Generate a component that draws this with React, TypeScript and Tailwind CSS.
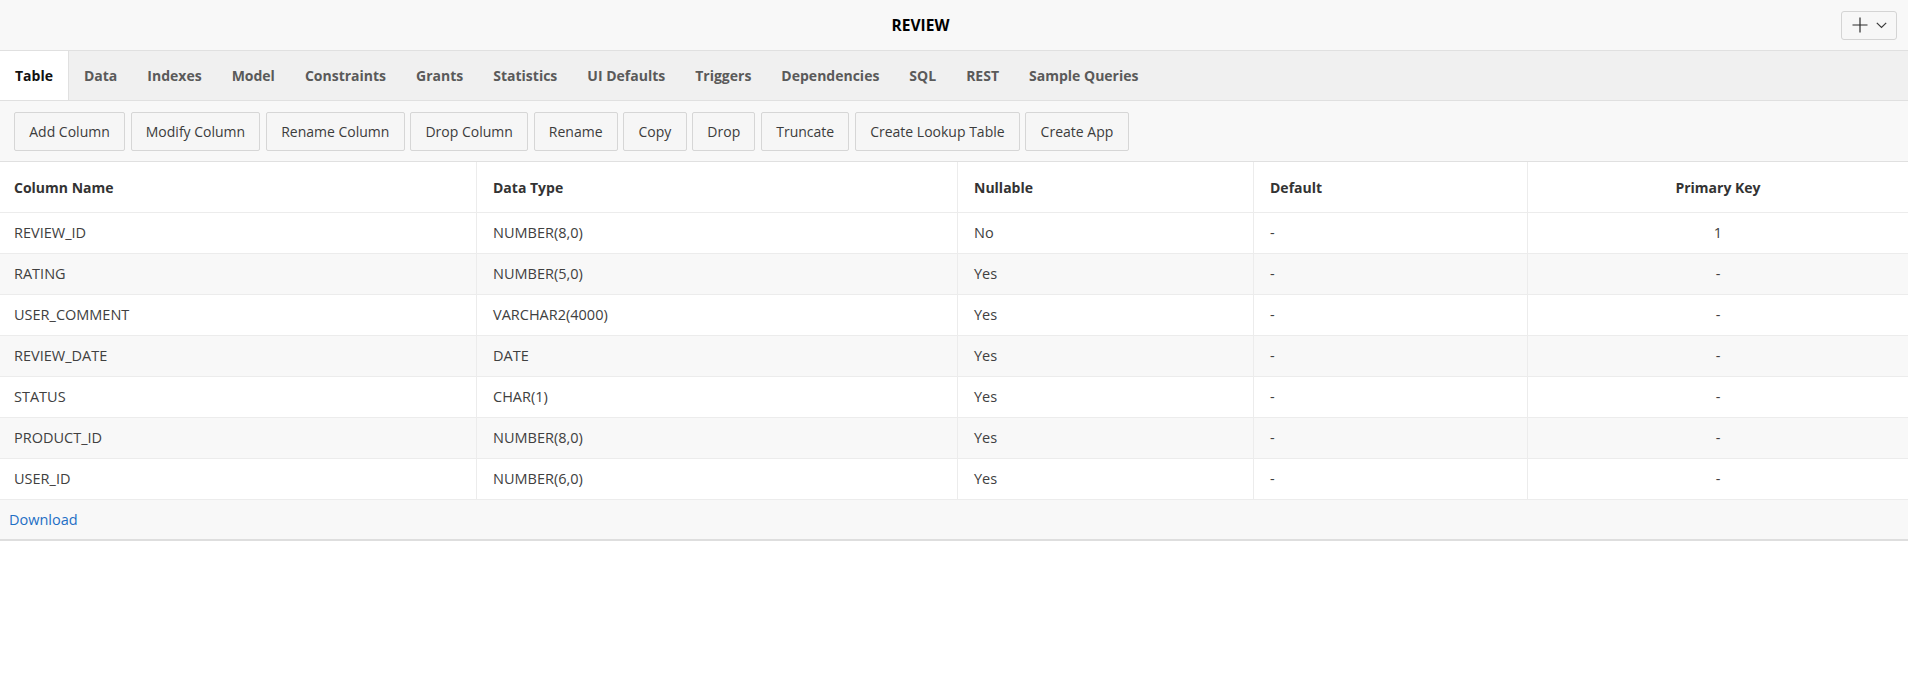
import React from 'react'

const tabs = [
  'Table',
  'Data',
  'Indexes',
  'Model',
  'Constraints',
  'Grants',
  'Statistics',
  'UI Defaults',
  'Triggers',
  'Dependencies',
  'SQL',
  'REST',
  'Sample Queries',
]

const actions = [
  'Add Column',
  'Modify Column',
  'Rename Column',
  'Drop Column',
  'Rename',
  'Copy',
  'Drop',
  'Truncate',
  'Create Lookup Table',
  'Create App',
]

interface ColumnRow {
  name: string
  type: string
  nullable: string
  def: string
  pk: string
}

const rows: ColumnRow[] = [
  { name: 'REVIEW_ID', type: 'NUMBER(8,0)', nullable: 'No', def: '-', pk: '1' },
  { name: 'RATING', type: 'NUMBER(5,0)', nullable: 'Yes', def: '-', pk: '-' },
  { name: 'USER_COMMENT', type: 'VARCHAR2(4000)', nullable: 'Yes', def: '-', pk: '-' },
  { name: 'REVIEW_DATE', type: 'DATE', nullable: 'Yes', def: '-', pk: '-' },
  { name: 'STATUS', type: 'CHAR(1)', nullable: 'Yes', def: '-', pk: '-' },
  { name: 'PRODUCT_ID', type: 'NUMBER(8,0)', nullable: 'Yes', def: '-', pk: '-' },
  { name: 'USER_ID', type: 'NUMBER(6,0)', nullable: 'Yes', def: '-', pk: '-' },
]

const gridCols = 'grid grid-cols-[476px_481px_296px_274px_1fr]'

const AddMenuButton: React.FC = () => (
  <button
    type="button"
    className="mr-[11px] flex h-[29px] w-[56px] items-center justify-center gap-[8px] rounded-[3px] border border-[#d4d4d4] bg-[#f7f7f7]"
  >
    <svg width="16" height="16" viewBox="0 0 16 16" fill="none" stroke="#2b2b2b" strokeWidth={1.2}>
      <path d="M8 0.5v15M0.5 8h15" />
    </svg>
    <svg width="11" height="7" viewBox="0 0 11 7" fill="none" stroke="#3a3a3a" strokeWidth={1.2}>
      <path d="M0.8 0.8l4.7 4.7 4.7-4.7" />
    </svg>
  </button>
)

export default function App() {
  return (
    <div className="w-full bg-white font-['Open_Sans',sans-serif] text-[14px]">
      {/* title bar */}
      <div className="flex h-[51px] items-center border-b border-[#e0e0e0] bg-[#f8f8f8]">
        <div className="flex-1 pt-[1px] text-center text-[15.5px] font-bold text-black">REVIEW</div>
        <AddMenuButton />
      </div>

      {/* tabs */}
      <div className="flex h-[50px] border-b border-[#e0e0e0] bg-[#f0f0f0]">
        {tabs.map((t, i) => (
          <div
            key={t}
            className={`flex items-center px-[15px] font-bold ${
              i === 0 ? 'border-r border-[#e0e0e0] bg-white text-[#111]' : 'text-[#5a5a5a]'
            }`}
          >
            {t}
          </div>
        ))}
      </div>

      {/* toolbar */}
      <div className="flex h-[61px] items-center gap-[5.5px] border-b border-[#e0e0e0] bg-[#f8f8f8] pl-[14px]">
        {actions.map((a) => (
          <button
            key={a}
            type="button"
            className="h-[39px] rounded-[2px] border border-[#d6d6d6] bg-[#f6f6f6] px-[14.25px] text-[14px] text-[#3c3c3c]"
          >
            {a}
          </button>
        ))}
      </div>

      {/* columns table */}
      <div className={`${gridCols} h-[51px] border-b border-[#ececec] bg-white font-bold text-[#333]`}>
        <div className="flex items-center pl-[14px]">Column Name</div>
        <div className="flex items-center border-l border-[#ececec] pl-[16px]">Data Type</div>
        <div className="flex items-center border-l border-[#ececec] pl-[16px]">Nullable</div>
        <div className="flex items-center border-l border-[#ececec] pl-[16px]">Default</div>
        <div className="flex items-center justify-center border-l border-[#ececec]">Primary Key</div>
      </div>
      {rows.map((r, i) => (
        <div
          key={r.name}
          className={`${gridCols} h-[41px] border-b border-[#ececec] text-[14.5px] text-[#404040] ${
            i % 2 === 1 ? 'bg-[#f8f8f8]' : 'bg-white'
          }`}
        >
          <div className="flex items-center pl-[14px]">{r.name}</div>
          <div className="flex items-center border-l border-[#ececec] pl-[16px]">{r.type}</div>
          <div className="flex items-center border-l border-[#ececec] pl-[16px]">{r.nullable}</div>
          <div className="flex items-center border-l border-[#ececec] pl-[16px]">{r.def}</div>
          <div className="flex items-center justify-center border-l border-[#ececec]">{r.pk}</div>
        </div>
      ))}

      {/* footer */}
      <div className="flex h-[41px] items-center border-b-2 border-[#dedede] bg-[#f8f8f8] pl-[9px]">
        <a href="#" className="text-[14.5px] text-[#1f6fc5]">
          Download
        </a>
      </div>
    </div>
  )
}
